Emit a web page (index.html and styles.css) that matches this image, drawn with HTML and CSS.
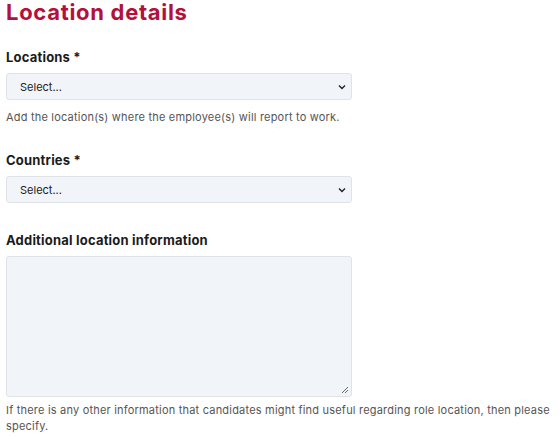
FILE: index.html
```html
<!DOCTYPE html>
<html>
<head>
<meta charset="utf-8">
<link rel="stylesheet" href="styles.css">
</head>
<body>
<div class="form">
  <h1 class="title">Location details</h1>
  <div class="field first">
    <label class="label">Locations *</label>
    <div class="select"><span>Select...</span><svg class="chev" width="8" height="6" viewBox="0 0 8 6"><path d="M1 1.5 L4 4.5 L7 1.5" fill="none" stroke="#222" stroke-width="1.4"/></svg></div>
    <p class="help">Add the location(s) where the employee(s) will report to work.</p>
  </div>
  <div class="field second">
    <label class="label">Countries *</label>
    <div class="select"><span>Select...</span><svg class="chev" width="8" height="6" viewBox="0 0 8 6"><path d="M1 1.5 L4 4.5 L7 1.5" fill="none" stroke="#222" stroke-width="1.4"/></svg></div>
  </div>
  <div class="field third">
    <label class="label">Additional location information</label>
    <div class="textarea"><svg class="grip" width="8" height="8" viewBox="0 0 8 8"><path d="M7 1 L1 7 M7 4 L4 7" stroke="#666" stroke-width="1"/></svg></div>
    <p class="help wide">If there is any other information that candidates might find useful regarding role location, then please specify.</p>
  </div>
</div>
</body>
</html>
```
FILE: styles.css
```css
html, body { margin: 0; padding: 0; background: #fff; }
body { font-family: Inter, "Open Sans", sans-serif; color: #1b1b1b; }
.form { padding: 0 6px; }
.title { margin: 0; font-size: 22px; line-height: 24px; font-weight: 700; color: #b3103c; letter-spacing: 0.7px; }
.field { display: flex; flex-direction: column; }
.field.first { margin-top: 25px; }
.field.second { margin-top: 27px; }
.field.third { margin-top: 29px; }
.label { font-size: 13px; font-weight: 700; line-height: 16px; color: #1b1b1b; letter-spacing: 0.2px; }
.select { margin-top: 8px; width: 346px; height: 27px; box-sizing: border-box; border: 1px solid #dfe3e8; border-radius: 3px; background: #f1f4f9; display: flex; align-items: center; justify-content: space-between; padding: 0 5px 0 13px; font-size: 11px; color: #222; }
.help { margin: 9px 0 0; font-size: 11px; line-height: 16px; color: #555; letter-spacing: 0.2px; }
.textarea { margin-top: 8px; width: 346px; height: 141px; box-sizing: border-box; border: 1px solid #dfe3e8; border-radius: 3px; background: #f1f4f9; position: relative; }
.grip { position: absolute; right: 2px; bottom: 2px; }
.help.wide { margin-top: 5px; }
```
